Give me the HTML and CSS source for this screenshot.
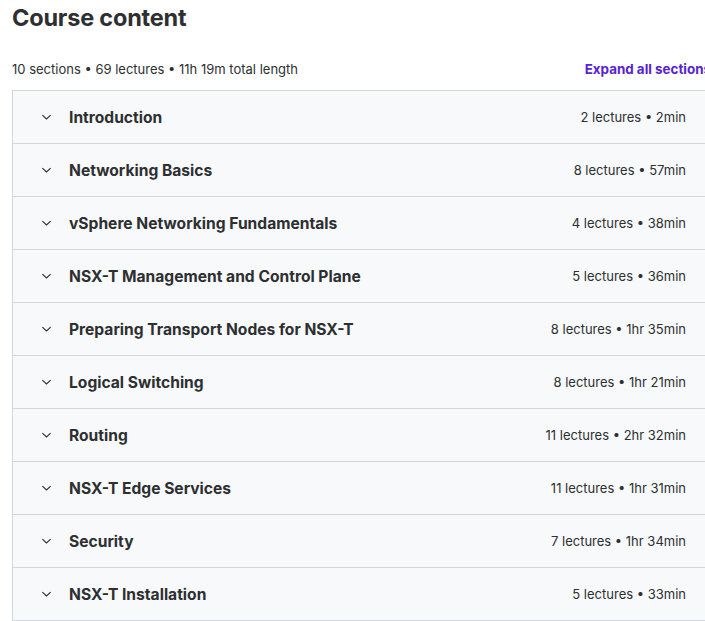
FILE: index.html
```html
<!DOCTYPE html>
<html>
<head>
<meta charset="utf-8">
<link rel="stylesheet" href="styles.css">
</head>
<body>
<div class="page">
  <h2 class="title">Course content</h2>
  <div class="summary">
    <span class="stats">10 sections • 69 lectures • 11h 19m total length</span>
    <button class="expand">Expand all sections</button>
  </div>
  <div class="sections">
    <div class="row"><svg class="chev" viewBox="0 0 12 8"><path d="M1.5 2 L6 6 L10.5 2"/></svg><span class="name">Introduction</span><span class="meta">2 lectures • 2min</span></div>
    <div class="row"><svg class="chev" viewBox="0 0 12 8"><path d="M1.5 2 L6 6 L10.5 2"/></svg><span class="name">Networking Basics</span><span class="meta">8 lectures • 57min</span></div>
    <div class="row"><svg class="chev" viewBox="0 0 12 8"><path d="M1.5 2 L6 6 L10.5 2"/></svg><span class="name">vSphere Networking Fundamentals</span><span class="meta">4 lectures • 38min</span></div>
    <div class="row"><svg class="chev" viewBox="0 0 12 8"><path d="M1.5 2 L6 6 L10.5 2"/></svg><span class="name">NSX-T Management and Control Plane</span><span class="meta">5 lectures • 36min</span></div>
    <div class="row"><svg class="chev" viewBox="0 0 12 8"><path d="M1.5 2 L6 6 L10.5 2"/></svg><span class="name">Preparing Transport Nodes for NSX-T</span><span class="meta">8 lectures • 1hr 35min</span></div>
    <div class="row"><svg class="chev" viewBox="0 0 12 8"><path d="M1.5 2 L6 6 L10.5 2"/></svg><span class="name">Logical Switching</span><span class="meta">8 lectures • 1hr 21min</span></div>
    <div class="row"><svg class="chev" viewBox="0 0 12 8"><path d="M1.5 2 L6 6 L10.5 2"/></svg><span class="name">Routing</span><span class="meta">11 lectures • 2hr 32min</span></div>
    <div class="row"><svg class="chev" viewBox="0 0 12 8"><path d="M1.5 2 L6 6 L10.5 2"/></svg><span class="name">NSX-T Edge Services</span><span class="meta">11 lectures • 1hr 31min</span></div>
    <div class="row"><svg class="chev" viewBox="0 0 12 8"><path d="M1.5 2 L6 6 L10.5 2"/></svg><span class="name">Security</span><span class="meta">7 lectures • 1hr 34min</span></div>
    <div class="row"><svg class="chev" viewBox="0 0 12 8"><path d="M1.5 2 L6 6 L10.5 2"/></svg><span class="name">NSX-T Installation</span><span class="meta">5 lectures • 33min</span></div>
  </div>
</div>
</body>
</html>
```
FILE: styles.css
```css
html, body {
  margin: 0;
  padding: 0;
  overflow: hidden;
  background: #fff;
}
body {
  font-family: Inter, "Noto Sans", sans-serif;
  color: #2d2f31;
}
.page {
  width: 699px;
  padding-left: 12px;
}
.title {
  margin: 0;
  padding-top: 4px;
  font-size: 23.5px;
  line-height: 28px;
  font-weight: 700;
  letter-spacing: -0.2px;
}
.summary {
  display: flex;
  justify-content: space-between;
  align-items: center;
  margin-top: 28px;
  height: 18px;
  margin-bottom: 12px;
}
.stats {
  font-size: 13px;
}
.expand {
  border: 0;
  background: none;
  padding: 0;
  font-family: inherit;
  font-size: 13.4px;
  font-weight: 700;
  color: #5624d0;
}
.sections {
  border: 1px solid #d1d7dc;
  border-bottom: 0;
}
.row {
  display: flex;
  align-items: center;
  height: 52px;
  border-bottom: 1px solid #d1d7dc;
  background: #f7f9fa;
  padding: 0 24px 0 28px;
}
.chev {
  width: 11px;
  height: 8px;
  fill: none;
  stroke: #2d2f31;
  stroke-width: 1.3;
  margin-right: 17px;
}
.name {
  flex: 1;
  font-size: 15.6px;
  font-weight: 700;
}
.meta {
  font-size: 13px;
}
```
